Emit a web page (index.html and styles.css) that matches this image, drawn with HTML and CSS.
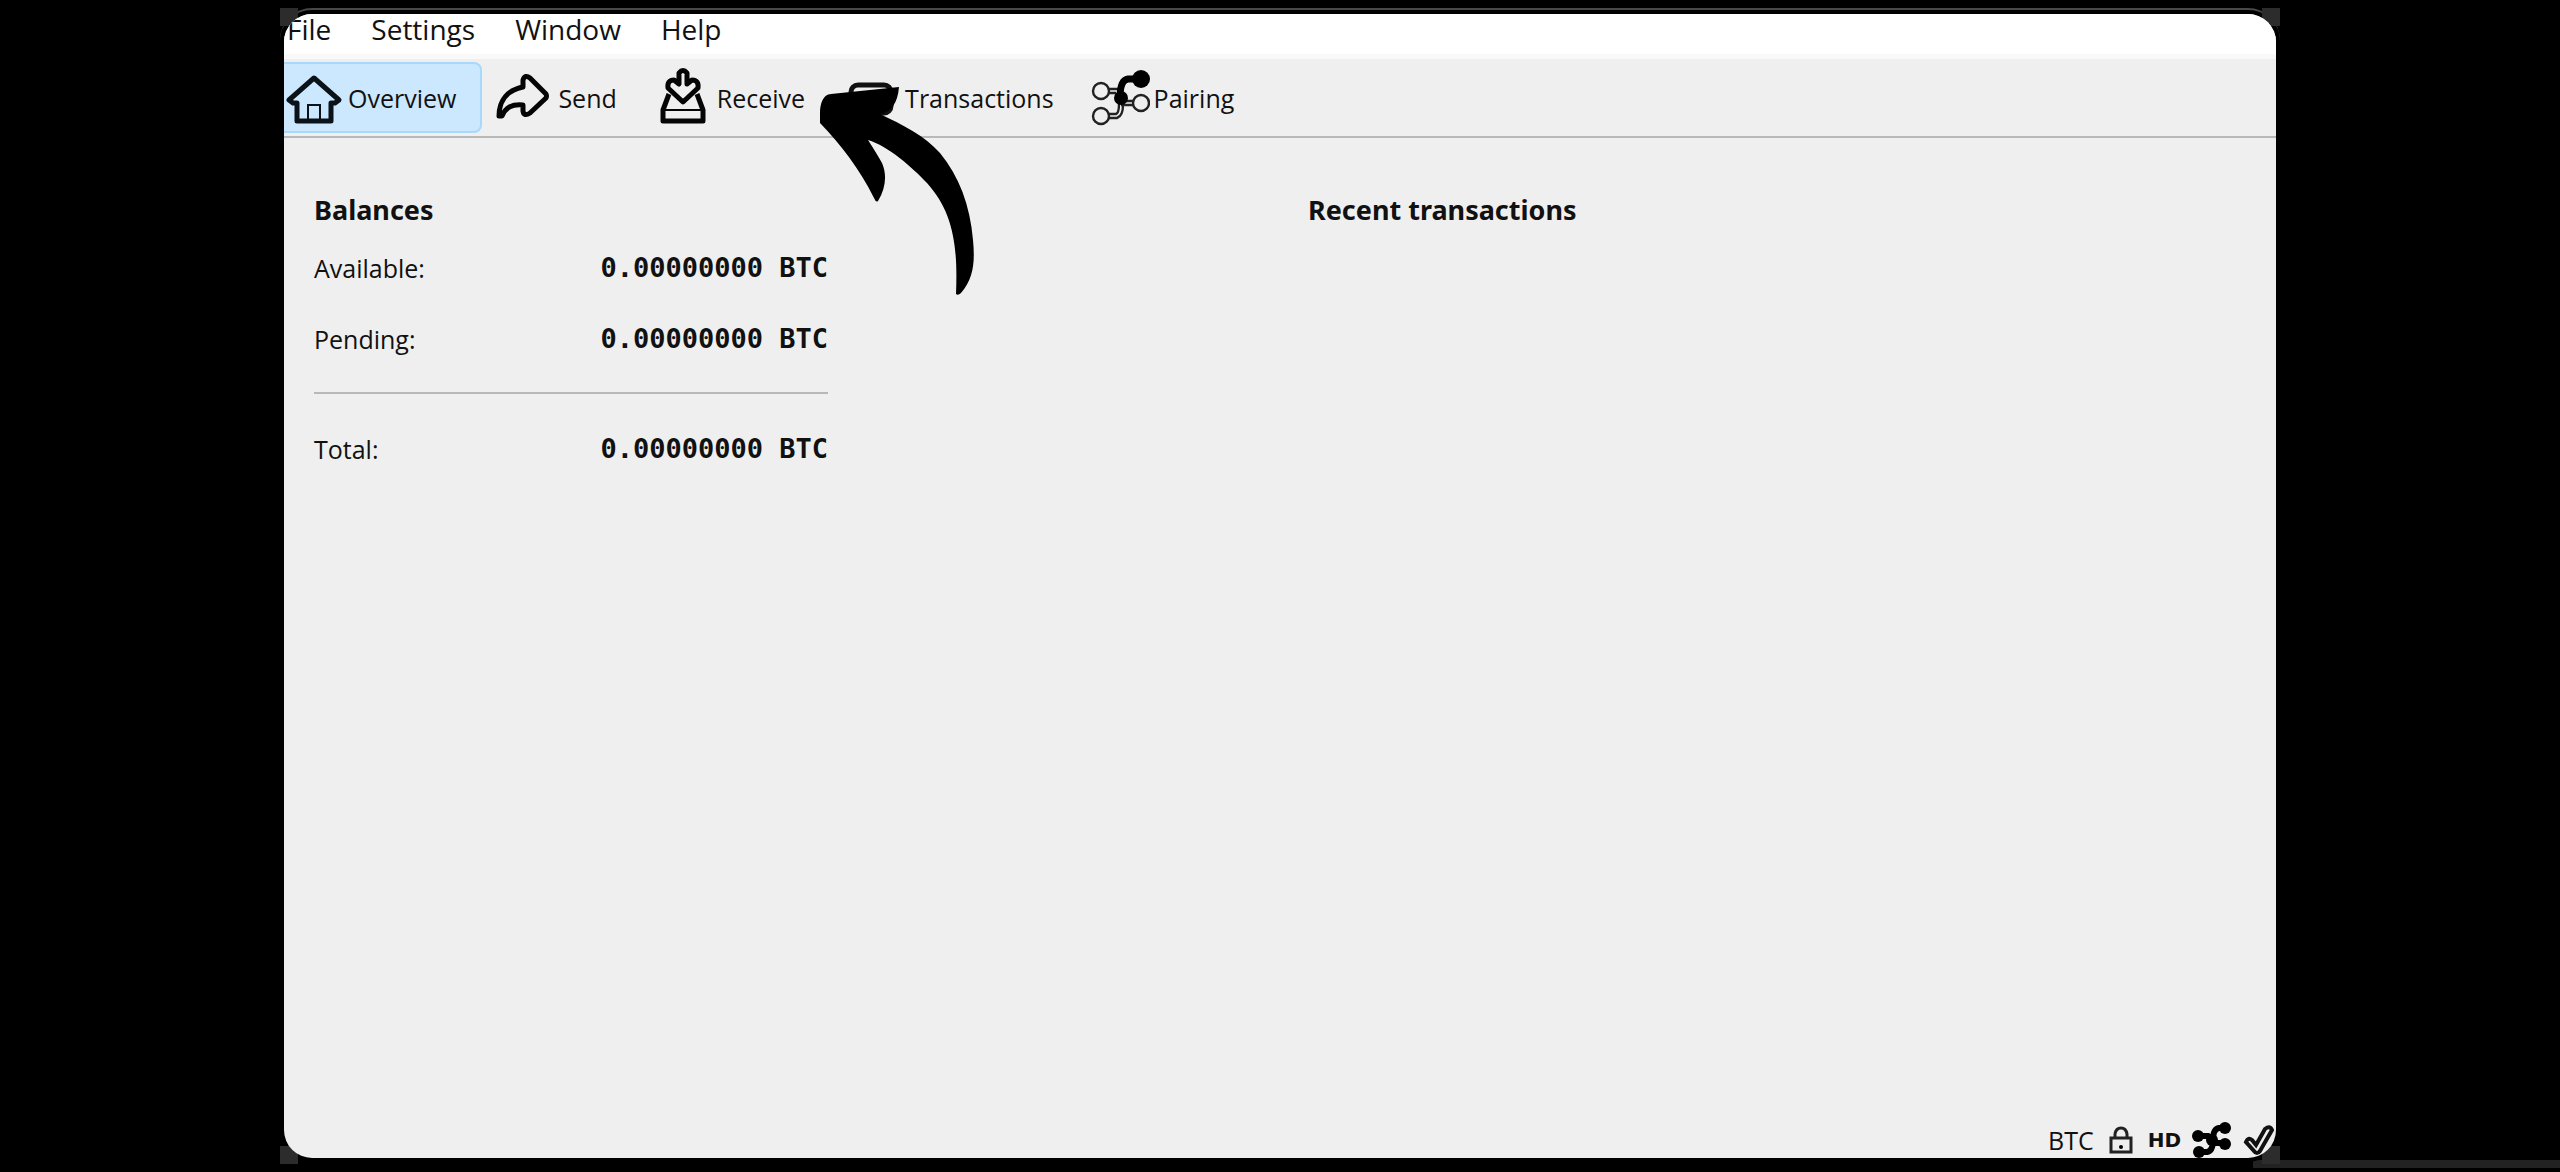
FILE: index.html
```html
<!DOCTYPE html>
<html lang="en">
<head>
<meta charset="utf-8">
<title>Wallet overview</title>
<link rel="stylesheet" href="styles.css">
</head>
<body>
<div class="stage">
  <div class="edge-strip"></div>
  <div class="frame">
  <i class="corner top-left"></i><i class="corner top-right"></i>
  <i class="corner bottom-left"></i><i class="corner bottom-right"></i>
  <div class="window">
    <nav class="menubar" aria-label="Menu">
      <button type="button">File</button>
      <button type="button">Settings</button>
      <button type="button">Window</button>
      <button type="button">Help</button>
    </nav>
    <div class="toolbar">
      <button type="button" class="tool active">
        <svg class="icon" viewBox="0 0 60 60"><path d="M5 32 30 10 55 32 51 35H47V53H13V35H9Z" fill="none" stroke="#0b1218" stroke-width="5" stroke-linejoin="round"/><path d="M24 53V37H36V53" fill="none" stroke="#0b1218" stroke-width="2"/></svg>
        <span>Overview</span>
      </button>
      <button type="button" class="tool">
        <svg class="icon" viewBox="0 0 60 60"><path d="M5 48C5 32 14 22 29 19V12Q31 6 36 10L52 26Q53 28 52 30L36 45Q30 49 29 43V37C18 36 12 39 8 48Z" fill="none" stroke="#050505" stroke-width="5" stroke-linejoin="round"/></svg>
        <span>Send</span>
      </button>
      <button type="button" class="tool">
        <svg class="icon" viewBox="0 0 60 60"><g fill="none" stroke="#050505" stroke-width="5" stroke-linejoin="round"><path d="M26 5Q30 0 34 5V16L39 12Q46 12 45 20L30 34 15 20Q14 12 21 12L26 16Z"/><path d="M16 26 10 42V53H50V42L44 26"/><path d="M11 42H49" stroke-width="2"/></g></svg>
        <span>Receive</span>
      </button>
      <button type="button" class="tool">
        <svg class="icon" viewBox="0 0 60 60"><rect x="10" y="17" width="40" height="28" rx="7" fill="none" stroke="#111" stroke-width="5"/><path d="M40 36H49" stroke="#111" stroke-width="4"/></svg>
        <span>Transactions</span>
      </button>
      <button type="button" class="tool">
        <svg class="icon" viewBox="0 0 60 60"><g fill="none" stroke="#222" stroke-width="2.4"><circle cx="11" cy="23" r="8"/><circle cx="51" cy="35" r="8"/><circle cx="11" cy="48" r="8"/><path d="M19 21H28M19 25H26M43 33H35M43 37H31M19 46H26Q29 45 29 36M19 50H27Q33 48 33 37"/></g><path d="M50 11H38Q30 12 30 30" fill="none" stroke="#000" stroke-width="7"/><circle cx="51" cy="11" r="9"/><circle cx="31" cy="30" r="7"/></svg>
        <span>Pairing</span>
      </button>
    </div>
    <main class="content">
      <section class="balances">
        <h2>Balances</h2>
        <dl>
          <div class="row"><dt>Available:</dt><dd>0.00000000 BTC</dd></div>
          <div class="row"><dt>Pending:</dt><dd>0.00000000 BTC</dd></div>
          <div class="row total"><dt>Total:</dt><dd>0.00000000 BTC</dd></div>
        </dl>
      </section>
      <section class="recent">
        <h2>Recent transactions</h2>
      </section>
    </main>
    <footer class="status">
      <span>BTC</span>
      <svg class="lock" viewBox="0 0 24 28"><path d="M2 12H22V26H2ZM6 12V8Q7 2 12 2T18 8V12" fill="none" stroke="#222" stroke-width="3"/><circle cx="12" cy="21" r="2"/></svg>
      <b class="hd">HD</b>
      <svg class="net" viewBox="0 0 40 36"><path d="M33 6H27Q21 7 21 18T15 30H7M6 14H16L24 21H34" fill="none" stroke="#000" stroke-width="6"/><circle cx="33" cy="6" r="6"/><circle cx="6" cy="14" r="6"/><circle cx="33" cy="22" r="6"/><circle cx="7" cy="30" r="6"/><circle cx="20" cy="18" r="6"/></svg>
      <svg class="check" viewBox="0 0 32 30"><path d="M3 17Q5 12 9 15L13 20 22 4Q27 0 29 5L17 26Q14 30 11 26Z" fill="none" stroke="#111" stroke-width="4"/></svg>
    </footer>
    <svg class="pointer" viewBox="818 84 158 214"><path d="M899 87 831 94C823 94 820 104 820 113V123C841 145 859 168 874 198Q876 203 878 201C886 188 887 174 882 163Q877 154 868 140C888 146 912 167 927 183C953 212 958 245 956 294Q958 296 961 293C974 278 975 261 973 240C970 205 959 176 940 153C925 136 903 125 880 114Q897 111 899 87Z"/></svg>
  </div>
  </div>
</div>
</body>
</html>
```
FILE: styles.css
```css
* { box-sizing: border-box; }
body {
  margin: 0;
  background: #000;
  color: #111;
  font-family: "Open Sans", "Noto Sans", sans-serif;
  font-size: 25px;
  line-height: 36px;
}
button {
  border: 0;
  padding: 0;
  background: none;
  color: inherit;
  font: inherit;
}
.stage {
  position: relative;
  display: grid;
  grid-template-columns: 284fr 1992fr 284fr;
  min-height: 100vh;
  padding: 14px 0;
}
.frame {
  position: relative;
  grid-column: 2;
  display: grid;
}
.frame::before {
  content: "";
  position: absolute;
  inset: -6px -4px -4px;
  border-top: 2px solid #484848;
  border-radius: 32px;
  background: #000;
}
.corner {
  position: absolute;
  width: 18px;
  height: 18px;
  background: #2c2c2c;
}
.top-left { top: -6px; left: -4px; }
.top-right { top: -6px; right: -4px; }
.bottom-left { bottom: -6px; left: -4px; }
.bottom-right { bottom: -6px; right: -4px; }
.edge-strip {
  position: absolute;
  right: 0;
  bottom: 4px;
  width: 12%;
  height: 8px;
  background: #222;
}
.window {
  position: relative;
  display: flex;
  flex-direction: column;
  overflow: hidden;
  border-radius: 28px;
  background: #efefef;
}
.menubar {
  display: flex;
  gap: 40px;
  align-items: flex-start;
  height: 45px;
  border-bottom: 5px solid #f9f9f9;
  padding-left: 3px;
  background: #fff;
  font-size: 28px;
  line-height: 30px;
}
.toolbar {
  display: flex;
  gap: 12px;
  align-items: center;
  height: 79px;
  border-bottom: 2px solid #b8b8b8;
}
.tool {
  display: flex;
  align-items: center;
  gap: 4px;
  height: 71px;
  padding-right: 24px;
}
.tool.active {
  border: 2px solid #a8d8fa;
  border-left: 0;
  border-radius: 0 8px 8px 0;
  background: #cce8ff;
}
.icon { width: 60px; height: 60px; }
.content {
  display: grid;
  grid-template-columns: 1fr 1fr;
  gap: 56px;
  flex: 1;
  padding: 52px 30px;
}
h2 {
  margin: 0;
  font-family: "Noto Sans", sans-serif;
  font-size: 27px;
  line-height: 40px;
}
.balances { max-width: 514px; }
dl { margin: 2px 0 0; }
.row {
  display: flex;
  align-items: center;
  justify-content: space-between;
  height: 71px;
}
dd {
  margin: 0;
  font-family: "DejaVu Sans Mono", monospace;
  font-size: 27px;
  font-weight: bold;
}
.total {
  height: 92px;
  margin-top: 18px;
  border-top: 2px solid #b8b8b8;
  padding-top: 20px;
}
.status {
  display: flex;
  align-items: center;
  justify-content: flex-end;
  gap: 11px;
  height: 36px;
  padding-right: 1px;
}
.lock { width: 24px; height: 28px; margin: 0 4px; }
.hd {
  font-family: "DejaVu Sans", sans-serif;
  font-size: 20px;
}
.net { width: 40px; height: 36px; }
.check { width: 32px; height: 30px; }
.pointer {
  position: absolute;
  left: 534px;
  top: 70px;
  width: 158px;
  height: 214px;
}
```
